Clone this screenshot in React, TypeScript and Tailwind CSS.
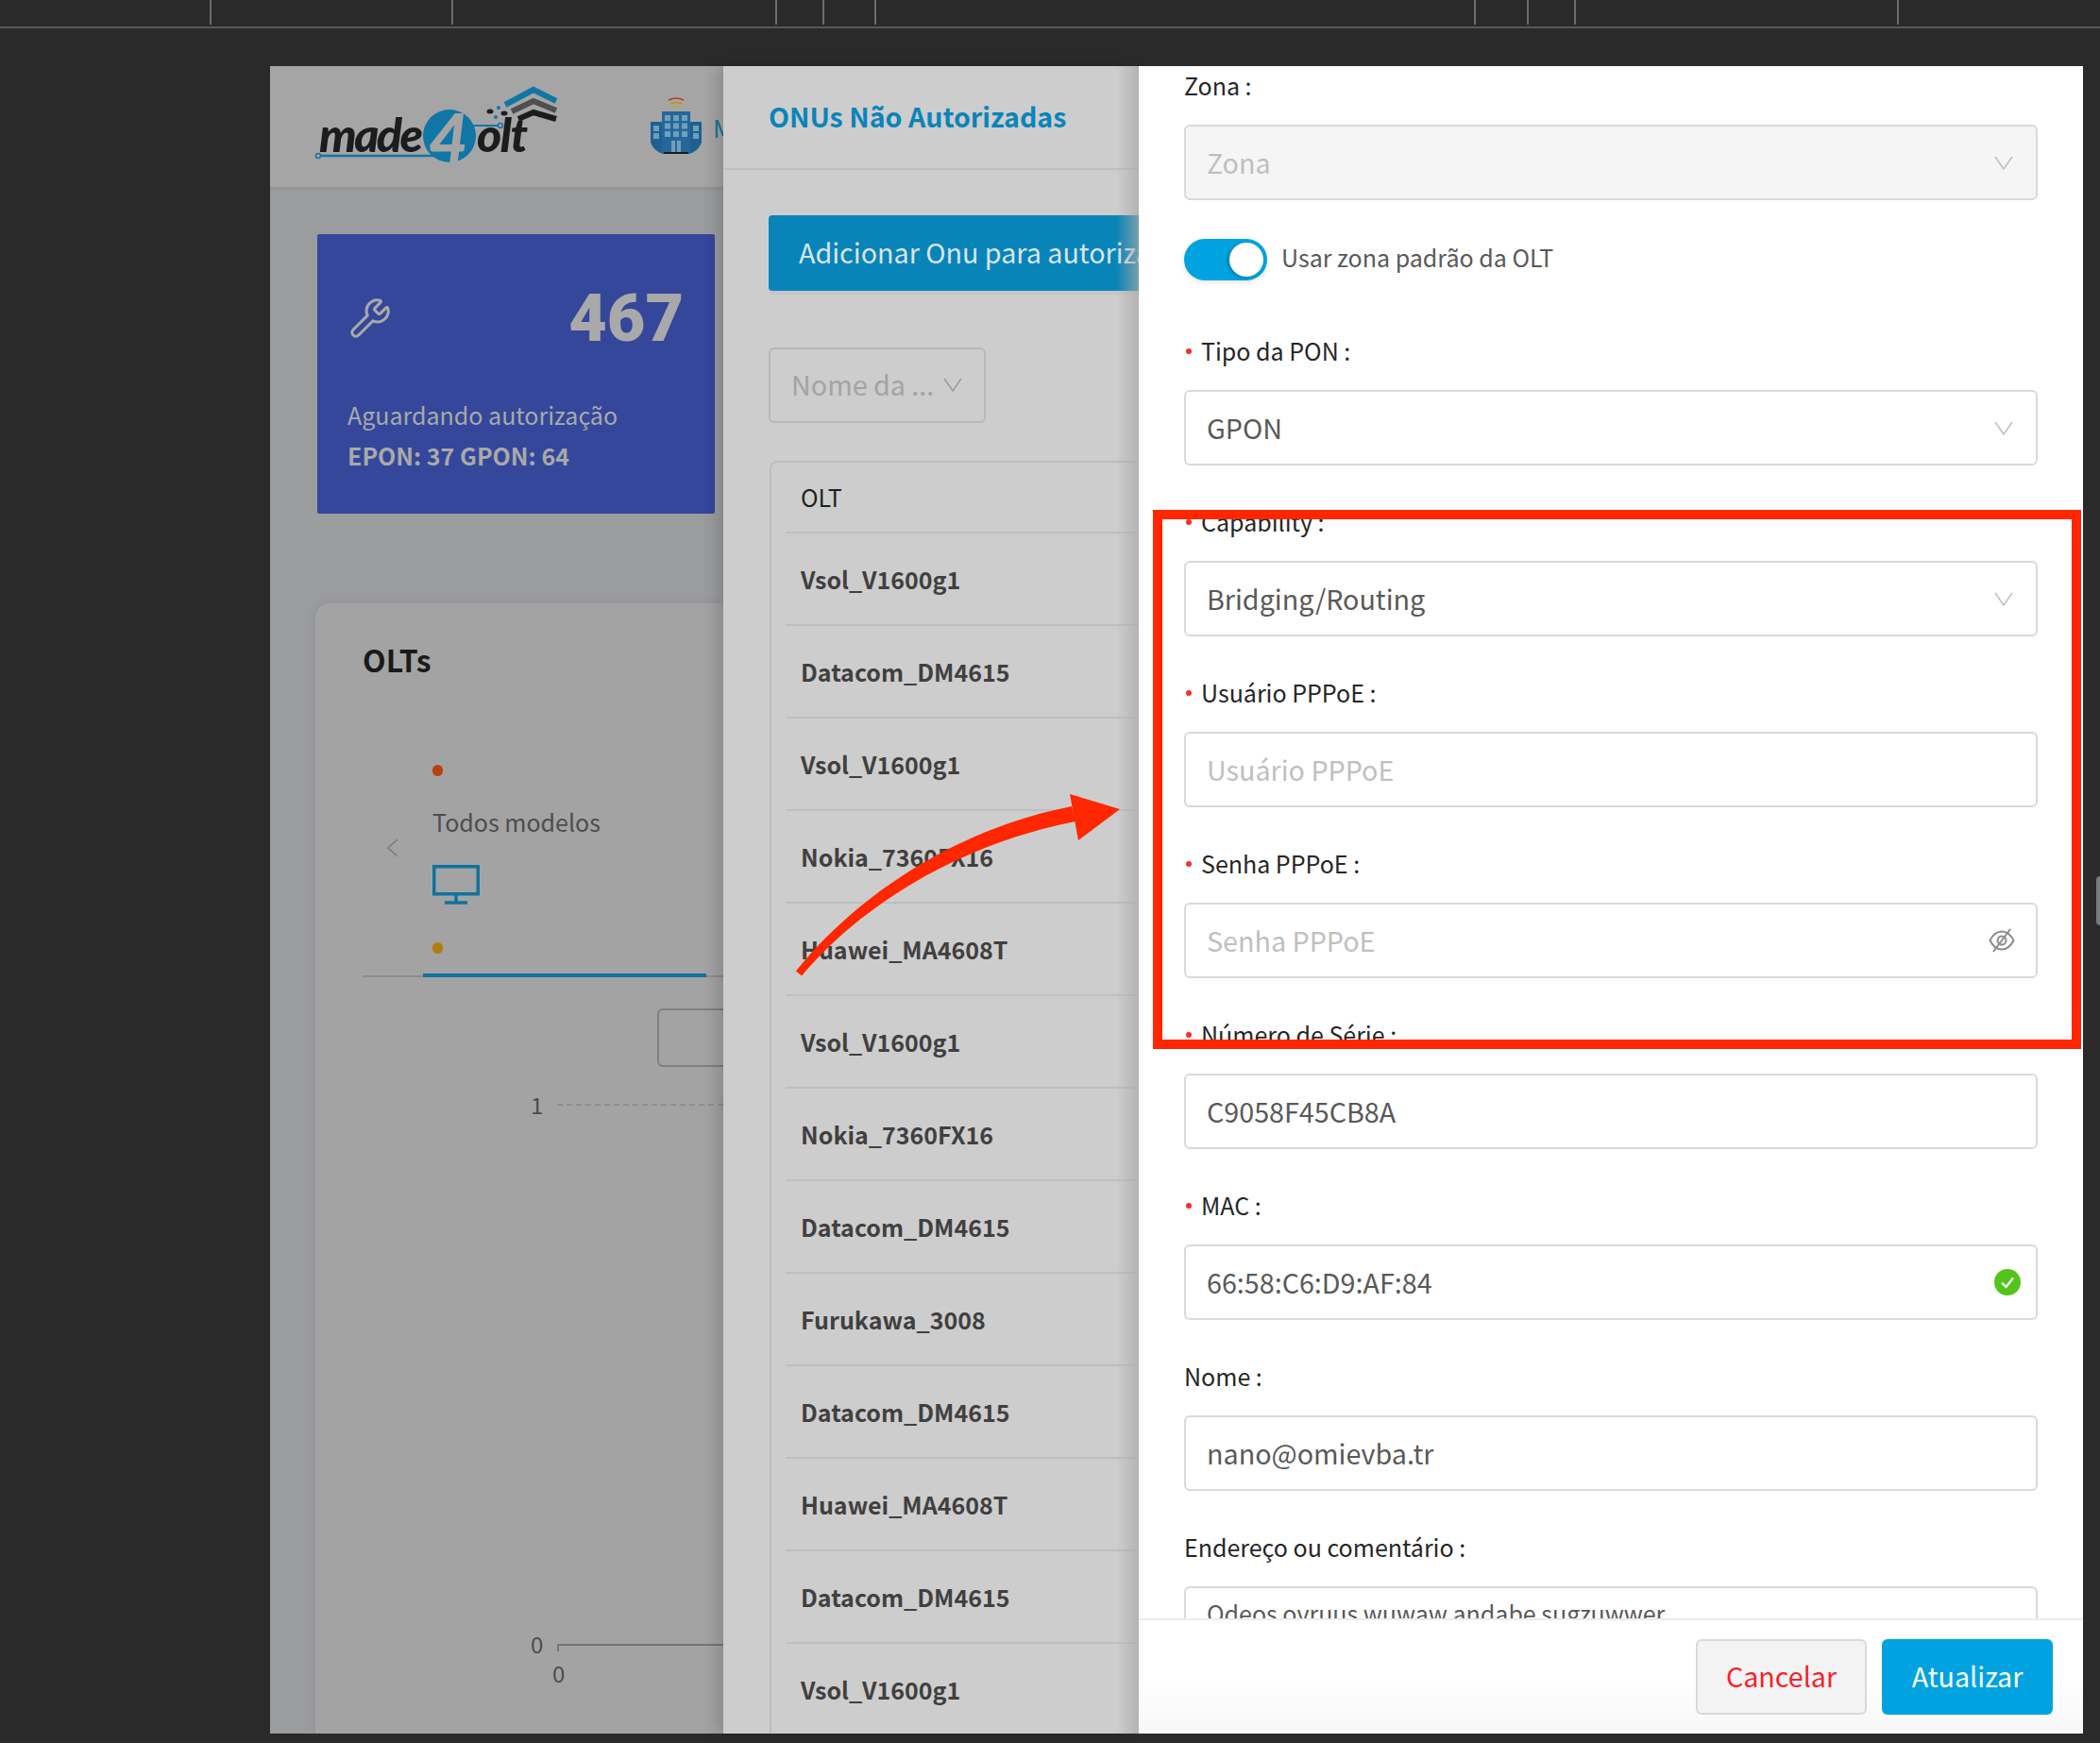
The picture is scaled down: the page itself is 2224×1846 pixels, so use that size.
import React from "react";
import { Wrench } from "lucide-react";

const font = { fontFamily: '"Noto Sans CJK SC", "Noto Sans", sans-serif' };

const rows = [
  "Vsol_V1600g1",
  "Datacom_DM4615",
  "Vsol_V1600g1",
  "Nokia_7360FX16",
  "Huawei_MA4608T",
  "Vsol_V1600g1",
  "Nokia_7360FX16",
  "Datacom_DM4615",
  "Furukawa_3008",
  "Datacom_DM4615",
  "Huawei_MA4608T",
  "Datacom_DM4615",
  "Vsol_V1600g1",
];

function Chevron({ color = "#bfbfbf" }: { color?: string }) {
  return (
    <svg width="20" height="15" viewBox="0 0 20 15" fill="none" className="shrink-0">
      <polyline points="1,1 10,14 19,1" stroke={color} strokeWidth="1.5" />
    </svg>
  );
}

function EyeOff() {
  return (
    <svg width="28" height="26" viewBox="0 0 28 26" fill="none" stroke="#8c8c8c" strokeWidth="2" className="mr-[-2px]">
      <path d="M1.5 13C5 6 9 3.5 14 3.5S23 6 26.5 13C23 20 19 22.5 14 22.5S5 20 1.5 13Z" />
      <circle cx="14" cy="13" r="4.5" />
      <line x1="23" y1="1" x2="5" y2="25" />
    </svg>
  );
}

function CheckOk() {
  return (
    <svg width="28" height="28" viewBox="0 0 28 28">
      <circle cx="14" cy="14" r="14" fill="#52c41a" />
      <polyline points="8,14.5 12.5,19 20,9.5" fill="none" stroke="#fff" strokeWidth="2.2" />
    </svg>
  );
}

function Field({
  label,
  required,
  children,
}: {
  label: string;
  required?: boolean;
  children: React.ReactNode;
}) {
  return (
    <div className="mb-[39px]">
      <div className="h-[44px] mb-[18px] pb-[3px] flex items-center text-[25px] text-[#262626] whitespace-nowrap">
        {required && <span className="w-[6px] h-[6px] rounded-full bg-[#ff2a2a] ml-[2px] mr-[10px]" />}
        {label}
      </div>
      {children}
    </div>
  );
}

function Box({
  text,
  placeholder,
  disabled,
  top,
  icon,
}: {
  text?: string;
  placeholder?: boolean;
  disabled?: boolean;
  top?: boolean;
  icon?: React.ReactNode;
}) {
  return (
    <div
      className={`h-[80px] rounded-[6px] border-2 border-[#d9d9d9] pl-[22px] pr-[24px] flex justify-between whitespace-nowrap ${
        top ? "items-start pt-[8px] text-[25px]" : "items-center text-[28.7px]"
      } ${disabled ? "bg-[#f5f5f5]" : "bg-white"} ${placeholder ? "text-[#bfbfbf]" : "text-[#595959]"}`}
    >
      <span className={top ? "" : "mb-[1px]"}>{text}</span>
      {icon}
    </div>
  );
}

function Logo() {
  return (
    <svg width="270" height="90" viewBox="330 85 270 90" className="shrink-0">
      <line x1="337" y1="161" x2="470" y2="161" stroke="#0f76a6" strokeWidth="2.5" />
      <circle cx="337" cy="161" r="2.5" fill="#a5a5a5" stroke="#0f76a6" strokeWidth="1.5" />
      <line x1="500" y1="129" x2="530" y2="129" stroke="#0f76a6" strokeWidth="2" />
      <circle cx="530" cy="129" r="2.5" fill="#a5a5a5" stroke="#0f76a6" strokeWidth="1.5" />
      <text x="338" y="157" fontFamily="Lato" fontWeight="900" fontStyle="italic" fontSize="50" fill="#1c1c1c" textLength="110">
        made
      </text>
      <circle cx="476" cy="140" r="28" fill="#0f76a6" />
      <text x="454" y="169" fontFamily="Lato" fontWeight="900" fontStyle="italic" fontSize="72" fill="#a5a5a5">
        4
      </text>
      <text x="505" y="157" fontFamily="Lato" fontWeight="900" fontStyle="italic" fontSize="50" fill="#1c1c1c" textLength="54">
        olt
      </text>
      <path d="M535 107L565 91L589 103" fill="none" stroke="#0f76a6" strokeWidth="6" />
      <path d="M542 114L565 103L589 113" fill="none" stroke="#4f4f4f" strokeWidth="6" />
      <path d="M549 122L565 115L589 122" fill="none" stroke="#1c1c1c" strokeWidth="6" />
      <ellipse cx="519" cy="114" rx="3.5" ry="2.5" fill="#1c1c1c" />
      <circle cx="528" cy="110" r="2" fill="#0f76a6" />
      <ellipse cx="534" cy="116" rx="3.5" ry="2.5" fill="#1c1c1c" />
      <circle cx="525" cy="120" r="2" fill="#0f76a6" />
    </svg>
  );
}

function Building() {
  const win = "#6f9fbb";
  return (
    <svg width="54" height="62" viewBox="0 0 54 62">
      <path d="M19 5Q27 1 35 5" fill="none" stroke="#b5420d" strokeWidth="1.6" />
      <path d="M21 9Q27 6 33 9" fill="none" stroke="#c98a1a" strokeWidth="1.6" />
      <path d="M23 13Q27 11 31 13" fill="none" stroke="#c9a03a" strokeWidth="1.6" />
      <path d="M0 28H12V17H42V28H54V50Q50 60 40 62H14Q4 60 0 50Z" fill="#1f6090" />
      <rect x="12" y="17" width="30" height="45" fill="#25679a" />
      {[0, 1, 2].map((r) =>
        [0, 1, 2].map((c) => (
          <rect key={`${r}-${c}`} x={15 + c * 9} y={21 + r * 8.5} width="6" height="6" fill={win} />
        ))
      )}
      <rect x="3" y="32" width="6" height="6" fill={win} />
      <rect x="3" y="40" width="6" height="6" fill={win} />
      <rect x="45" y="32" width="6" height="6" fill={win} />
      <rect x="45" y="40" width="6" height="6" fill={win} />
      <rect x="22" y="48" width="4" height="12" fill={win} />
      <rect x="28" y="48" width="4" height="12" fill={win} />
      <rect x="14" y="60" width="26" height="2" fill="#1c1c1c" />
    </svg>
  );
}

function Monitor() {
  return (
    <svg width="50" height="42" viewBox="0 0 50 42" fill="none" stroke="#0e73a0" strokeWidth="3.5" className="block">
      <rect x="1.75" y="1.75" width="46.5" height="29" />
      <line x1="25" y1="31" x2="25" y2="40" />
      <line x1="13" y1="40" x2="37" y2="40" />
    </svg>
  );
}

function LeftPage() {
  return (
    <div className="w-[480px] h-full shrink-0 bg-[#9b9c9e] flex flex-col overflow-hidden">
      <div className="h-[128px] shrink-0 bg-[#a5a5a5] flex items-center pl-[44px] shadow-[0_2px_4px_rgba(0,0,0,0.08)]">
        <Logo />
        <div className="ml-[89px] mt-[-4px] shrink-0">
          <Building />
        </div>
        <span className="ml-[12px] text-[26px] text-[#0f73a0]">M</span>
      </div>

      <div className="ml-[50px] mt-[50px] w-[421px] h-[296px] shrink-0 bg-[#34479b] rounded-[2px] pl-[32px] pr-[33px] text-[#a9a9a9]">
        <div className="flex items-center justify-between h-[130px] pt-[47px]">
          <Wrench size={46} strokeWidth={1.6} className="text-[#a9a9a9] -scale-x-100 rotate-90 ml-[1px]" />
          <span className="text-[70px] font-black leading-none" style={{ fontFamily: "Roboto, sans-serif" }}>
            467
          </span>
        </div>
        <div className="mt-[41px] text-[25px] leading-[40px] whitespace-nowrap">Aguardando autorização</div>
        <div className="mt-[3px] text-[25px] font-bold leading-[40px] whitespace-nowrap">EPON: 37 GPON: 64</div>
      </div>

      <div className="ml-[47px] mt-[95px] flex-1 bg-[#a3a3a3] rounded-tl-[16px] border-l border-[#94979f] shadow-[0_0_8px_rgba(120,125,140,0.3)]">
        <div className="pl-[50px] pt-[37px] text-[32px] font-bold leading-[44px] text-[#1a1a1a]">OLTs</div>

        <div className="mt-[90px] ml-[50px] h-[225px] border-b-2 border-[#8c8c8c] flex">
          <div className="w-[64px] flex items-start justify-center">
            <svg className="mt-[78px]" width="12" height="20" viewBox="0 0 12 20" fill="none" stroke="#7d7d7d" strokeWidth="1.6">
              <polyline points="11,1 1,10 11,19" />
            </svg>
          </div>
          <div className="flex-1 relative">
            <div className="ml-[10px] w-[11px] h-[12px] rounded-full bg-[#b5420d]" />
            <div className="ml-[10px] mt-[26px] text-[25px] leading-[44px] text-[#4d4d4d] whitespace-nowrap">Todos modelos</div>
            <div className="ml-[10px] mt-[24px]">
              <Monitor />
            </div>
            <div className="ml-[10px] mt-[40px] w-[11px] h-[12px] rounded-full bg-[#b07c10]" />
            <div className="absolute left-0 bottom-[-2px] w-[300px] h-[4px] bg-[#0e73a0]" />
          </div>
        </div>

        <div className="mt-[33px] ml-[362px] h-[62px] border-2 border-r-0 border-[#808080] rounded-l-[6px]" />

        <div className="mt-[22px] ml-[228px] flex items-center h-[36px] text-[24px] text-[#4d4d4d]">
          <span className="w-[10px]">1</span>
          <span className="ml-[18px] flex-1 border-t-2 border-dashed border-[#8f8f8f]" />
        </div>

        <div className="mt-[535px] ml-[228px] flex items-center h-[36px] text-[24px] text-[#4d4d4d]">
          <span className="w-[10px]">0</span>
          <span className="ml-[18px] flex-1 h-[8px] mt-[7px] border-t-2 border-l-2 border-[#767676]" />
        </div>
        <div className="ml-[251px] text-[24px] leading-[30px] text-[#4d4d4d] mt-[-2px]">0</div>
      </div>
    </div>
  );
}

function Drawer() {
  return (
    <div className="w-[440px] h-full shrink-0 bg-[#cdcdcd] overflow-hidden relative shadow-[-8px_0_14px_rgba(0,0,0,0.14)]">
      <div className="h-[110px] pb-[2px] border-b-2 border-[#bfbfbf] flex items-center pl-[48px] text-[28.6px] font-bold text-[#0a84b8] whitespace-nowrap">
        ONUs Não Autorizadas
      </div>
      <div className="ml-[48px] mt-[48px] w-[600px] h-[80px] bg-[#0984b8] rounded-[4px] shadow-[0_4px_0_rgba(0,0,0,0.03)] flex items-center pl-[32px] pb-[2px] text-[28.7px] text-[#d9e4ea] whitespace-nowrap">
        Adicionar Onu para autorizar
      </div>
      <div className="ml-[48px] mt-[60px] w-[230px] h-[80px] border-2 border-[#b8b8b8] rounded-[6px] flex items-center justify-between pl-[22px] pr-[23px] pb-[2px] text-[28.7px] text-[#a3a3a3] whitespace-nowrap">
        Nome da ...
        <Chevron color="#9a9a9a" />
      </div>
      <div className="ml-[49px] mt-[40px] border-l-2 border-t-2 border-[#bdbdbd] rounded-tl-[8px] pl-[15px]">
        <div className="h-[75px] border-b-2 border-[#bfbfbf] flex items-center pl-[16px] text-[25px] text-[#1f1f1f]">OLT</div>
        {rows.map((r, i) => (
          <div
            key={i}
            className="h-[98px] border-b-2 border-[#bfbfbf] flex items-center pl-[16px] pt-[2px] text-[25px] font-bold text-[#404040] whitespace-nowrap"
          >
            {r}
          </div>
        ))}
      </div>
      <div className="absolute top-0 right-0 h-full w-[24px] bg-gradient-to-r from-transparent to-[#a8a8a8]/70" />
    </div>
  );
}

function FormPanel() {
  return (
    <div className="w-[1000px] h-full shrink-0 bg-white flex flex-col relative">
      <div className="flex-1 overflow-hidden px-[48px] pt-px">
        <div className="h-[44px] mb-[17px] pb-[4px] flex items-center text-[25px] text-[#262626]">Zona :</div>
        <Box text="Zona" placeholder disabled icon={<Chevron />} />
        <div className="mt-[41px] h-[44px] flex items-center">
          <div className="w-[88px] h-[44px] rounded-full bg-[#00a3e0] flex items-center justify-end pr-[4px] shadow-[0_2px_6px_rgba(0,0,0,0.1)]">
            <div className="w-[36px] h-[36px] rounded-full bg-white shadow-[-2px_1px_4px_rgba(0,0,0,0.25)]" />
          </div>
          <span className="ml-[15px] pb-[4px] text-[25px] text-[#595959]">Usar zona padrão da OLT</span>
        </div>
        <div className="h-[54px]" />
        <Field label="Tipo da PON :" required>
          <Box text="GPON" icon={<Chevron />} />
        </Field>
        <Field label="Capability :" required>
          <Box text="Bridging/Routing" icon={<Chevron />} />
        </Field>
        <Field label="Usuário PPPoE :" required>
          <Box text="Usuário PPPoE" placeholder />
        </Field>
        <Field label="Senha PPPoE :" required>
          <Box text="Senha PPPoE" placeholder icon={<EyeOff />} />
        </Field>
        <Field label="Número de Série :" required>
          <Box text="C9058F45CB8A" />
        </Field>
        <Field label="MAC :" required>
          <Box text="66:58:C6:D9:AF:84" icon={<span className="mr-[-8px] flex"><CheckOk /></span>} />
        </Field>
        <Field label="Nome :">
          <Box text="nano@omievba.tr" />
        </Field>
        <Field label="Endereço ou comentário :">
          <Box text="Odeos ovruus wuwaw andabe sugzuwwer" top />
        </Field>
      </div>
      <div className="h-[122px] shrink-0 border-t-2 border-[#ececec] bg-gradient-to-b from-white via-white to-[#f7f7f7] flex justify-end gap-[16px] pr-[32px] pt-[20px]">
        <div className="w-[181px] h-[80px] rounded-[6px] border-2 border-[#d9d9d9] bg-[#f3f3f3] flex items-center justify-center pb-[2px] text-[28.7px] text-[#f5222d]">
          Cancelar
        </div>
        <div className="w-[181px] h-[80px] rounded-[6px] bg-[#00a3e0] flex items-center justify-center pb-[2px] text-[28.7px] text-white">
          Atualizar
        </div>
      </div>
    </div>
  );
}

export default function App() {
  return (
    <div className="relative w-[2224px] h-[1846px] bg-[#2a2a2b] overflow-hidden" style={font}>
      <div className="h-[30px] border-b-2 border-[#56585a] flex items-start">
        <div className="ml-[222px] w-[2px] h-[26px] bg-[#6a6c6e]" />
        <div className="ml-[254px] w-[2px] h-[26px] bg-[#6a6c6e]" />
        <div className="ml-[341px] w-[2px] h-[26px] bg-[#6a6c6e]" />
        <div className="ml-[48px] w-[2px] h-[26px] bg-[#6a6c6e]" />
        <div className="ml-[53px] w-[2px] h-[26px] bg-[#6a6c6e]" />
        <div className="ml-[633px] w-[2px] h-[26px] bg-[#6a6c6e]" />
        <div className="ml-[54px] w-[2px] h-[26px] bg-[#6a6c6e]" />
        <div className="ml-[48px] w-[2px] h-[26px] bg-[#6a6c6e]" />
        <div className="ml-[340px] w-[2px] h-[26px] bg-[#6a6c6e]" />
      </div>

      <div className="ml-[286px] mt-[40px] w-[1920px] h-[1766px] flex">
        <LeftPage />
        <Drawer />
        <FormPanel />
      </div>

      {/* scrollbar thumb on the far right */}
      <div className="absolute left-[2220px] top-[928px] w-[4px] h-[52px] rounded-l bg-[#77797b]" />

      {/* annotation: red box + arrow drawn over the shot */}
      <div className="absolute left-[1221px] top-[540px] w-[983px] h-[571px] border-[10px] border-[#ff2600]" />
      <svg className="absolute left-0 top-0" width="2224" height="1846" fill="none">
        <path d="M843 1028.5C896 962 997 881 1135 854L1139 870C1003 897 904 968 849 1033.5Z" fill="#ff2600" />
        <polygon points="1133,841 1186,857 1142,890" fill="#ff2600" />
      </svg>
    </div>
  );
}
